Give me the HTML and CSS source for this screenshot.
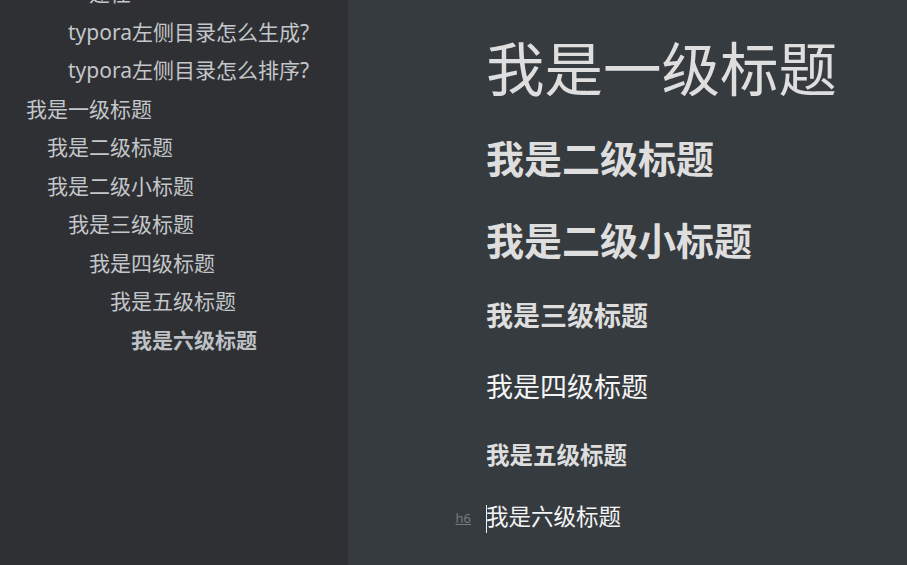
FILE: index.html
```html
<!DOCTYPE html>
<html lang="zh-CN">
<head>
<meta charset="utf-8">
<title>Typora</title>
<link rel="stylesheet" href="styles.css">
</head>
<body>
<div class="app">
  <aside class="sidebar">
    <ul class="outline">
      <li class="lv4">建任</li>
      <li class="lv3">typora左侧目录怎么生成?</li>
      <li class="lv3">typora左侧目录怎么排序?</li>
      <li class="lv1">我是一级标题</li>
      <li class="lv2">我是二级标题</li>
      <li class="lv2">我是二级小标题</li>
      <li class="lv3">我是三级标题</li>
      <li class="lv4">我是四级标题</li>
      <li class="lv5">我是五级标题</li>
      <li class="lv6 active">我是六级标题</li>
    </ul>
  </aside>
  <main class="editor">
    <h1 class="h h1">我是一级标题</h1>
    <h2 class="h h2">我是二级标题</h2>
    <h2 class="h h2b">我是二级小标题</h2>
    <h3 class="h h3">我是三级标题</h3>
    <h4 class="h h4">我是四级标题</h4>
    <h5 class="h h5">我是五级标题</h5>
    <h6 class="h h6"><span class="tag">h6</span><span class="caret"></span>我是六级标题</h6>
  </main>
</div>
</body>
</html>
```
FILE: styles.css
```css
html, body {
  margin: 0;
  padding: 0;
  height: 100%;
  overflow: hidden;
}
body {
  font-family: "Noto Sans", "Noto Sans CJK SC", sans-serif;
  background: #363b40;
}
.app {
  display: flex;
  height: 565px;
}
.sidebar {
  width: 348px;
  flex: none;
  background: #2e3033;
  overflow: hidden;
}
.outline {
  list-style: none;
  margin: -26px 0 0 0;
  padding: 0 0 0 26px;
  font-size: 21px;
  color: #c3c6ca;
}
.outline li {
  height: 38.5px;
  line-height: 38.5px;
  white-space: nowrap;
}
.lv1 { padding-left: 0; }
.lv2 { padding-left: 21px; }
.lv3 { padding-left: 42px; }
.lv4 { padding-left: 63px; }
.lv5 { padding-left: 84px; }
.lv6 { padding-left: 105px; }
.outline .active {
  font-weight: bold;
  color: #bdc0c5;
}
.editor {
  flex: 1;
  padding: 18px 0 0 138px;
  color: #dedede;
}
.h {
  margin: 0;
  white-space: nowrap;
  position: relative;
}
.h1 { font-size: 58.5px; font-weight: normal; line-height: 100px; }
.h2 { font-size: 38px; font-weight: bold; line-height: 80px; }
.h2b { font-size: 38px; font-weight: bold; line-height: 84px; }
.h3 { font-size: 27px; font-weight: bold; line-height: 68px; }
.h4 { font-size: 27px; font-weight: normal; line-height: 74px; color: #f4f4f4; }
.h5 { font-size: 23.5px; font-weight: bold; line-height: 62px; }
.h6 { font-size: 22.5px; font-weight: normal; line-height: 62px; color: #f4f4f4; }
.tag {
  position: absolute;
  right: calc(100% + 15px);
  top: 1px;
  font-size: 13px;
  color: #777c81;
  text-decoration: underline;
  line-height: 62px;
  font-family: "Noto Sans", sans-serif;
}
.caret {
  display: inline-block;
  width: 1px;
  height: 28px;
  background: #f0f0f0;
  vertical-align: middle;
  margin-right: -1px;
}
```
